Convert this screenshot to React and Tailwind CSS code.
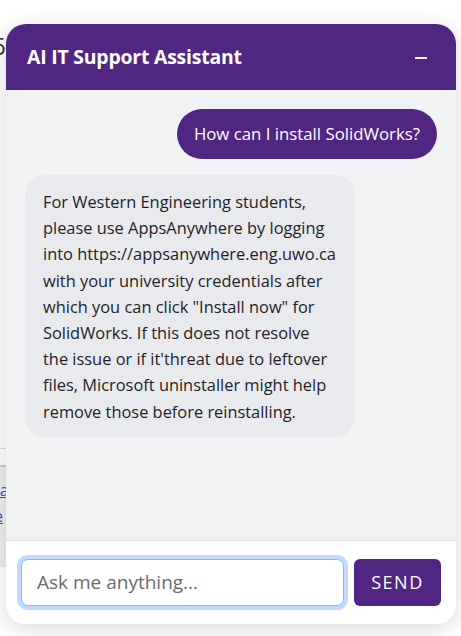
import React from "react";

const botLines = [
  "For Western Engineering students,",
  "please use AppsAnywhere by logging",
  "into https://appsanywhere.eng.uwo.ca",
  "with your university credentials after",
  'which you can click "Install now" for',
  "SolidWorks. If this does not resolve",
  "the issue or if it'threat due to leftover",
  "files, Microsoft uninstaller might help",
  "remove those before reinstalling.",
];

export default function App() {
  const font = { fontFamily: '"Open Sans", "Noto Sans", sans-serif' };
  return (
    <div className="relative w-[461px] h-[636px] overflow-hidden bg-white" style={font}>
      {/* background page peeking out on the left */}
      <div className="absolute inset-0">
        <div className="absolute left-[-8px] top-[34px] text-[24px] leading-none text-[#333]">6</div>
        <div className="absolute left-0 top-[448px] w-[40px] h-px bg-[#dcdcdc]"></div>
        <div className="absolute left-0 top-[465px] w-[40px] h-[102px] bg-[#efefef] border-t-2 border-[#c8c8c8]">
          <div className="mt-[10px] ml-[-10px] text-[16px] leading-[26px] text-[#1a5fd6] underline">na</div>
          <div className="ml-[-10px] text-[16px] leading-[26px] text-[#1a5fd6] underline">le</div>
        </div>
      </div>

      {/* chat widget */}
      <div className="absolute left-[6px] top-[24px] w-[450px] h-[600px] rounded-[20px] overflow-hidden flex flex-col bg-white shadow-[0_4px_22px_rgba(0,0,0,0.16)]">
        <div className="h-[66px] shrink-0 bg-[#512682] flex items-center justify-between pl-[21px] pr-[29px]">
          <span className="text-white font-bold text-[19.4px] tracking-[-0.2px]">AI IT Support Assistant</span>
          <span className="block w-[12px] h-[2px] bg-white mt-[2px]"></span>
        </div>

        <div className="flex-1 bg-[#f1f2f4] px-[19px] pt-[19px] flex flex-col gap-[16px]">
          <div className="self-end bg-[#512682] text-white rounded-[25px] h-[50px] px-[17px] flex items-center text-[16.8px]">
            How can I install SolidWorks?
          </div>
          <div className="self-start w-[330px] bg-[#e8eaed] text-[#1f2328] rounded-[20px] px-[18px] pt-[14px] pb-[12px] text-[16.4px] leading-[26.2px] whitespace-nowrap">
            {botLines.map((l, i) => (
              <div key={i}>{l}</div>
            ))}
          </div>
        </div>

        <div className="h-[84px] shrink-0 border-t border-[#dfe1e5] bg-white flex items-center pl-[15px] pr-[15px] gap-[10px]">
          <div className="flex-1 h-[47px] rounded-[7px] border border-[#8ab4f8] ring-4 ring-[#c3dafe] bg-white flex items-center pl-[15px] text-[19px] text-[#6b6b6b]">
            Ask me anything...
          </div>
          <button className="w-[87px] h-[47px] rounded-[6px] bg-[#512682] text-white text-[18px] tracking-[1.5px]">
            SEND
          </button>
        </div>
      </div>
    </div>
  );
}
